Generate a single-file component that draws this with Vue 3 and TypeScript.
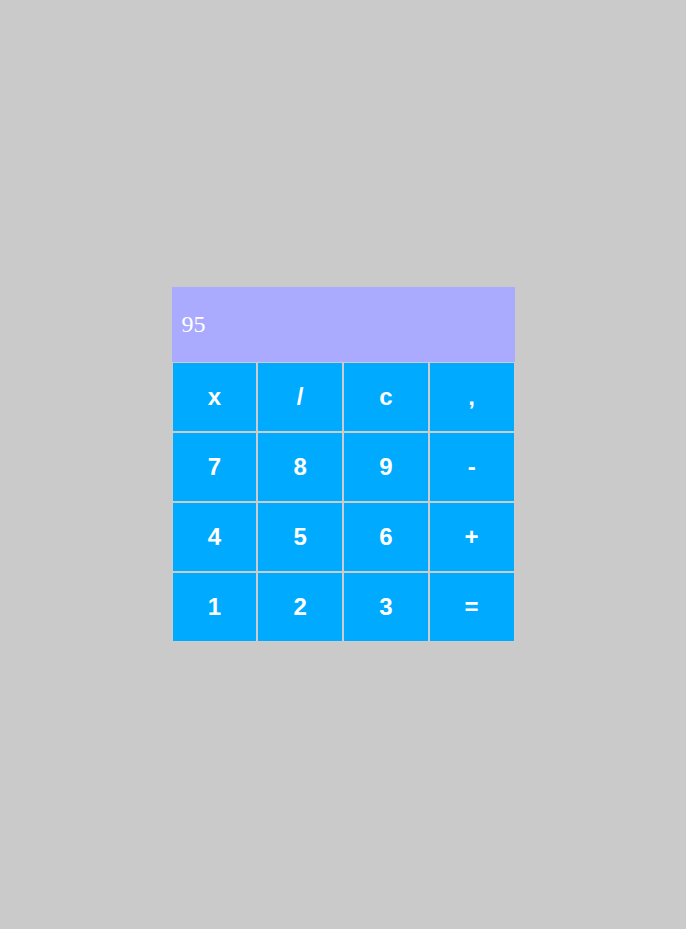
<script setup lang="ts">
import { ref } from 'vue'

const keys: string[] = [
  'x', '/', 'c', ',',
  '7', '8', '9', '-',
  '4', '5', '6', '+',
  '1', '2', '3', '=',
]

const names: Record<string, string> = {
  x: 'multiply',
  '/': 'divide',
  c: 'clear',
  ',': 'decimal comma',
  '-': 'subtract',
  '+': 'add',
  '=': 'equals',
}

const display = ref('95')

function calculate(text: string): string {
  const tokens = text.replace(/,/g, '.').match(/\d+(\.\d+)?|[x/+-]/g) ?? []
  const terms: number[] = []
  let operator = '+'
  for (const token of tokens) {
    if (/^[x/+-]$/.test(token)) {
      operator = token
      continue
    }
    const value = Number(token)
    if (operator === '+') terms.push(value)
    else if (operator === '-') terms.push(-value)
    else {
      const previous = terms.pop() ?? 0
      terms.push(operator === 'x' ? previous * value : previous / value)
    }
  }
  return String(terms.reduce((sum, term) => sum + term, 0)).replace('.', ',')
}

function press(key: string): void {
  if (key === 'c') display.value = ''
  else if (key === '=') display.value = calculate(display.value)
  else display.value += key
}
</script>

<template>
  <main class="page">
    <section class="calculator" aria-label="Calculator">
      <output class="display">{{ display }}</output>
      <div class="keys">
        <button
          v-for="key in keys"
          :key="key"
          type="button"
          class="key"
          :aria-label="names[key] ?? key"
          @click="press(key)"
        >{{ key }}</button>
      </div>
    </section>
  </main>
</template>

<style>
body {
  margin: 0;
  background: #cacaca;
}
</style>

<style scoped>
.page {
  display: flex;
  align-items: center;
  justify-content: center;
  min-height: 100vh;
}

.calculator {
  width: 50%;
}

.display {
  display: flex;
  align-items: center;
  box-sizing: border-box;
  height: 75px;
  padding: 0 10px;
  overflow: hidden;
  background: #aaaaff;
  color: #fff;
  font-family: "Liberation Serif", serif;
  font-size: 24px;
}

.keys {
  display: grid;
  grid-template-columns: repeat(4, 1fr);
  grid-auto-rows: 70px;
}

.key {
  padding: 0;
  border: 1px solid #ccc;
  border-radius: 0;
  background: #00aaff;
  color: #fff;
  font-family: "Liberation Sans", Arial, sans-serif;
  font-size: 24px;
  font-weight: 700;
  cursor: pointer;
}
</style>
